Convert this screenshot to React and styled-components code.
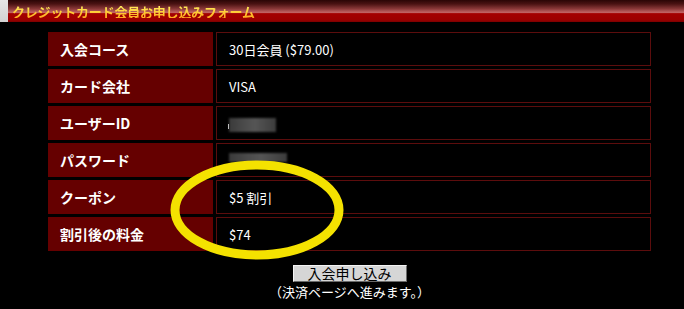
import styled, { createGlobalStyle } from "styled-components";

const GlobalStyle = createGlobalStyle`
  html, body {
    margin: 0;
    padding: 0;
    background: #000;
  }
  body {
    font-family: "Noto Sans CJK JP", "Liberation Sans", sans-serif;
    color: #fff;
  }
`;

const rows = [
  { label: "入会コース", value: "30日会員 ($79.00)" },
  { label: "カード会社", value: "VISA" },
  { label: "ユーザーID", hidden: "id" },
  { label: "パスワード", hidden: "pw" },
  { label: "クーポン", value: "$5 割引" },
  { label: "割引後の料金", value: "$74" },
];

const App = () => {
  return (
    <Page>
      <GlobalStyle />
      <HeaderRow>
        <Edge />
        <TitleBar>
          <Title>クレジットカード会員お申し込みフォーム</Title>
        </TitleBar>
      </HeaderRow>

      <FormArea>
        <FormTable>
          <tbody>
            {rows.map((r) => (
              <tr key={r.label}>
                <Label>{r.label}</Label>
                <Value>
                  {r.hidden === "id" && (
                    <>
                      <Caret />
                      <Blur $w={47} $h={14} />
                    </>
                  )}
                  {r.hidden === "pw" && <Blur $w={58} $h={9} $up />}
                  {r.value}
                </Value>
              </tr>
            ))}
          </tbody>
        </FormTable>

        <Submit>
          <SubmitButton type="button">入会申し込み</SubmitButton>
          <Note>（決済ページへ進みます。）</Note>
        </Submit>

        {/* hand-drawn marker circle over the coupon rows */}
        <Marker width="190" height="116" viewBox="0 0 190 116">
          <ellipse
            cx="95"
            cy="58"
            rx="82"
            ry="45"
            fill="none"
            stroke="#f4e200"
            strokeWidth="9"
          />
        </Marker>
      </FormArea>
    </Page>
  );
};

export default App;

const Page = styled.div`
  width: 684px;
  height: 309px;
  overflow: hidden;
  background: #000;
`;

const HeaderRow = styled.div`
  display: flex;
  height: 22px;
`;

const Edge = styled.div`
  width: 8px;
  background: linear-gradient(to bottom, #e6e6e6, #d2d2d2);
`;

const TitleBar = styled.div`
  flex: 1;
  display: flex;
  align-items: center;
  padding-left: 4px;
  background: linear-gradient(
    to bottom,
    #2a0505 0%,
    #4a1212 18%,
    #8a3838 40%,
    #b45858 52%,
    #c06262 57%,
    #a40000 62%,
    #9c0000 90%,
    #7a0000 100%
  );
`;

const Title = styled.span`
  font-size: 13px;
  font-weight: bold;
  line-height: 1;
  letter-spacing: -0.2px;
  background: linear-gradient(to bottom, #fff066 0%, #ffd23a 50%, #ffa81e 100%);
  -webkit-background-clip: text;
  background-clip: text;
  color: transparent;
`;

const FormArea = styled.div`
  position: relative;
  width: 609px;
  margin: 7px 0 0 45px;
`;

const FormTable = styled.table`
  width: 609px;
  border-collapse: separate;
  border-spacing: 3px;
  table-layout: fixed;
`;

const Label = styled.td`
  width: 165px;
  height: 34px;
  box-sizing: border-box;
  padding: 0 0 0 12px;
  background: #650000;
  color: #fff;
  font-size: 14px;
  font-weight: bold;
  white-space: nowrap;
`;

const Value = styled.td`
  height: 34px;
  box-sizing: border-box;
  padding: 0 0 0 12px;
  border: 1px solid #5c0d0d;
  background: #000;
  color: #fff;
  font-size: 13px;
  white-space: nowrap;
`;

const Blur = styled.span`
  display: inline-block;
  vertical-align: middle;
  width: ${(p) => p.$w}px;
  height: ${(p) => p.$h}px;
  margin-top: ${(p) => (p.$up ? "-8px" : "0")};
  background: linear-gradient(
    to right,
    #3a3a3a 0%,
    #4a4a4a 30%,
    #555 55%,
    #3c3c3c 100%
  );
  filter: blur(1px);
`;

const Caret = styled.span`
  display: inline-block;
  vertical-align: middle;
  width: 1px;
  height: 5px;
  margin: 4px 0 0 -1px;
  background: #fff;
`;

const Submit = styled.div`
  display: flex;
  flex-direction: column;
  align-items: center;
  margin-top: 11px;
`;

const SubmitButton = styled.button`
  width: 114px;
  height: 17px;
  padding: 0;
  box-sizing: border-box;
  border: 1px solid;
  border-color: #f4f4f4 #6a6a6a #6a6a6a #f4f4f4;
  background: #d6d6d6;
  color: #000;
  font-family: "Noto Sans CJK JP", sans-serif;
  font-size: 14px;
  line-height: 15px;
`;

const Note = styled.div`
  margin-top: 2px;
  font-size: 13px;
  line-height: 16px;
  color: #fff;
  white-space: nowrap;
`;

const Marker = styled.svg`
  position: absolute;
  left: 117px;
  top: 123px;
  pointer-events: none;
`;
